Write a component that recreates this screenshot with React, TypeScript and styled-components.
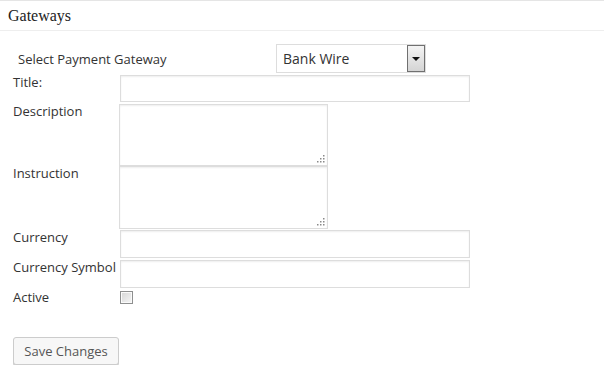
import styled, { createGlobalStyle } from 'styled-components';

const Global = createGlobalStyle`
  body {
    margin: 0;
    background: #fff;
    font-family: "Open Sans", "Liberation Sans", sans-serif;
    color: #333;
  }
`;

const Panel = styled.section`
  border-top: 1px solid #e5e5e5;
  width: 604px;
`;

const Header = styled.header`
  height: 29px;
  border-bottom: 1px solid #eeeeee;
  padding-left: 8px;
  display: flex;
  align-items: center;
`;

const HeaderTitle = styled.h2`
  margin: 0;
  font-family: "Liberation Serif", serif;
  font-weight: normal;
  font-size: 16px;
  color: #222;
`;

const Body = styled.div`
  padding: 13px 0 0 13px;
`;

const GatewayRow = styled.div`
  display: flex;
  align-items: center;
  height: 29px;
  padding-left: 5px;
  margin-bottom: 2px;
`;

const GatewayLabel = styled.span`
  width: 258px;
  font-size: 13px;
`;

const SelectBox = styled.div`
  display: flex;
  width: 150px;
  height: 29px;
  box-sizing: border-box;
  border: 1px solid #dddddd;
  background: #fff;
`;

const Select = styled.select`
  appearance: none;
  flex: 1;
  border: none;
  background: transparent;
  outline: none;
  padding: 0 0 0 6px;
  font-family: inherit;
  font-size: 14px;
  color: #333;
`;

const ArrowButton = styled.span`
  width: 18px;
  box-sizing: border-box;
  border: 1px solid #707070;
  background: linear-gradient(#f4f4f4, #d4d4d4);
  display: flex;
  align-items: center;
  justify-content: center;
  &::after {
    content: '';
    border-left: 4px solid transparent;
    border-right: 4px solid transparent;
    border-top: 4px solid #111;
  }
`;

const Fields = styled.div`
  display: grid;
  grid-template-columns: 107px 1fr;
  align-items: start;
`;

const Label = styled.label`
  font-size: 13px;
  line-height: 14px;
`;

const TextInput = styled.input<{ $height?: number }>`
  display: block;
  width: 350px;
  height: ${(p) => p.$height ?? 28}px;
  box-sizing: border-box;
  margin: 0 0 2px 0;
  border: 1px solid #dddddd;
  box-shadow: inset 0 1px 2px rgba(0, 0, 0, 0.07);
  font-family: inherit;
  font-size: 13px;
`;

const AreaWrap = styled.div<{ $after: number }>`
  position: relative;
  width: 209px;
  margin: 0 0 ${(p) => p.$after}px -1px;
`;

const TextArea = styled.textarea<{ $height: number }>`
  display: block;
  width: 209px;
  height: ${(p) => p.$height}px;
  box-sizing: border-box;
  margin: 0;
  border: 1px solid #dddddd;
  box-shadow: inset 0 1px 2px rgba(0, 0, 0, 0.07);
  resize: none;
  font-family: inherit;
  font-size: 13px;
`;

const Grip = styled.svg`
  position: absolute;
  right: 3px;
  bottom: 3px;
`;

const Check = styled.input`
  display: block;
  appearance: none;
  margin: 1px 0 0 0;
  width: 13px;
  height: 13px;
  box-sizing: border-box;
  border: 1px solid #8e8f8f;
  background: linear-gradient(135deg, #d5d5d5, #f6f6f6);
  box-shadow: inset 0 0 0 1px #fafafa;
`;

const SaveButton = styled.button`
  display: block;
  margin-top: 33px;
  width: 106px;
  height: 28px;
  box-sizing: border-box;
  border: 1px solid #cccccc;
  border-radius: 3px;
  background: #f7f7f7;
  box-shadow: 0 1px 0 #cccccc;
  font-family: inherit;
  font-size: 13px;
  color: #555;
`;

function ResizeGrip() {
  const dots = [
    [6, 0],
    [6, 3],
    [3, 3],
    [6, 6],
    [3, 6],
    [0, 6],
  ];
  return (
    <Grip width="8" height="8" viewBox="0 0 8 8">
      {dots.map(([x, y]) => (
        <rect key={`${x}-${y}`} x={x} y={y} width="1.5" height="1.5" fill="#8a8a8a" />
      ))}
    </Grip>
  );
}

export default function App() {
  return (
    <>
      <Global />
      <Panel>
        <Header>
          <HeaderTitle>Gateways</HeaderTitle>
        </Header>
        <Body>
          <GatewayRow>
            <GatewayLabel>Select Payment Gateway</GatewayLabel>
            <SelectBox>
              <Select defaultValue="bank">
                <option value="bank">Bank Wire</option>
              </Select>
              <ArrowButton />
            </SelectBox>
          </GatewayRow>
          <Fields>
            <Label>Title:</Label>
            <TextInput type="text" $height={27} />
            <Label>Description</Label>
            <AreaWrap $after={0}>
              <TextArea $height={62} />
              <ResizeGrip />
            </AreaWrap>
            <Label>Instruction</Label>
            <AreaWrap $after={1}>
              <TextArea $height={63} />
              <ResizeGrip />
            </AreaWrap>
            <Label>Currency</Label>
            <TextInput type="text" />
            <Label>Currency Symbol</Label>
            <TextInput type="text" />
            <Label>Active</Label>
            <Check type="checkbox" />
          </Fields>
          <SaveButton>Save Changes</SaveButton>
        </Body>
      </Panel>
    </>
  );
}
